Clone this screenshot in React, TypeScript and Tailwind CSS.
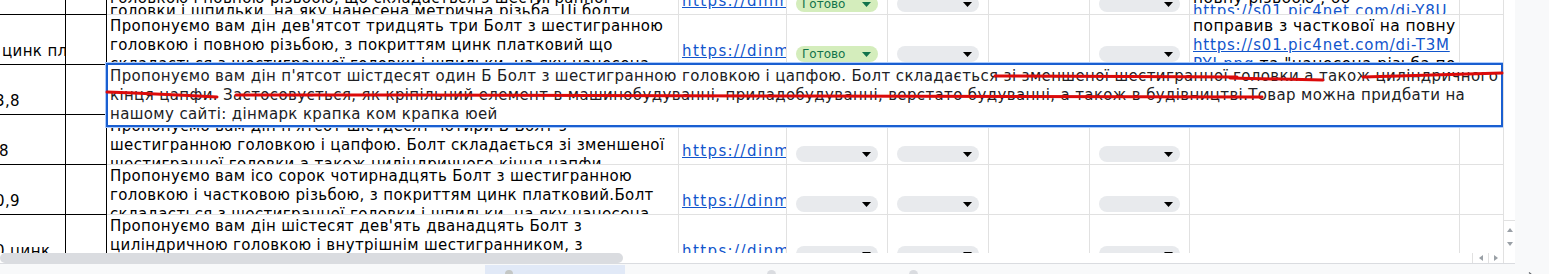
import type { ReactNode } from "react";

const GRID =
  "grid grid-cols-[66px_41px_572px_108px_101px_101px_101px_100px_270px_43px] h-[50px]";

const LINK = "text-[#1155cc] underline tracking-[0.8px]";
const NOTE = "text-[15.5px] tracking-[0.4px]";

type Row = {
  left?: ReactNode;
  desc: string[];
  cut?: boolean;
  status: "done" | "empty";
  comment?: ReactNode[];
};

const rows: Row[] = [
  {
    desc: [
      "головкою і повною різьбою, що складається з шестигранної",
      "головки і шпильки, на яку нанесена метрична різьба. Ці болти",
    ],
    cut: true,
    status: "done",
    comment: [
      <span className={NOTE}>повну різьбою , бо</span>,
      <span className={LINK}>https://s01.pic4net.com/di-Y8U</span>,
    ],
  },
  {
    left: <span className="ml-[2px]">цинк платковий</span>,
    desc: [
      "Пропонуємо вам дін дев'ятсот тридцять три Болт з шестигранною",
      "головкою і повною різьбою, з покриттям цинк платковий що",
      "складається з шестигранної головки і шпильки, на яку нанесена",
    ],
    status: "done",
    comment: [
      <span className={NOTE}>поправив з часткової на повну</span>,
      <span className={LINK}>https://s01.pic4net.com/di-T3M</span>,
      <>
        <span className={LINK}>PYI.png</span>
        <span className={NOTE}> та "нанесена різьба по</span>
      </>,
    ],
  },
  {
    left: <span className="-ml-[5px]">3,8</span>,
    desc: [
      "Пропонуємо вам дін п'ятсот шістдесят один Б Болт з",
      "шестигранною головкою і цапфою. Болт складається зі зменшеної",
    ],
    status: "empty",
  },
  {
    left: <span className="-ml-[1px]">8</span>,
    desc: [
      "Пропонуємо вам дін п'ятсот шістдесят чотири Б Болт з",
      "шестигранною головкою і цапфою. Болт складається зі зменшеної",
      "шестигранної головки а також циліндричного кінця цапфи.",
    ],
    status: "empty",
  },
  {
    left: <span className="-ml-[5px]">0,9</span>,
    desc: [
      "Пропонуємо вам ісо сорок чотирнадцять Болт з шестигранною",
      "головкою і частковою різьбою, з покриттям цинк платковий.Болт",
      "складається з шестигранної головки і шпильки, на яку нанесена",
    ],
    status: "empty",
  },
  {
    left: <span className="-ml-[5px]">0 цинк</span>,
    desc: [
      "Пропонуємо вам дін шістесят дев'ять дванадцять Болт з",
      "циліндричною головкою і внутрішнім шестигранником, з",
      "покриттям цинк платковий.",
    ],
    status: "empty",
  },
];

function Chip({ done }: { done?: boolean }) {
  return (
    <div
      className={`mx-[9px] mb-[2px] h-[16px] rounded-full flex items-center justify-between pl-[6px] pr-[7px] tracking-normal ${
        done ? "bg-[#d4edbc] text-[#11734b]" : "bg-[#e8eaed]"
      }`}
    >
      <span className="text-[12px] leading-none">{done ? "Готово" : ""}</span>
      <svg width="9" height="5" viewBox="0 0 9 5">
        <path d="M0 0h9L4.5 5z" fill={done ? "#11734b" : "#000"} />
      </svg>
    </div>
  );
}

function SheetRow({ row }: { row: Row }) {
  const gray = "border-r border-b border-[#e1e1e1]";
  return (
    <div className={GRID}>
      <div className="border-r border-b border-black overflow-hidden flex items-end pb-[3px] leading-[19px] whitespace-nowrap">
        {row.left}
      </div>
      <div className="border-r border-b border-black" />
      <div
        className={`${gray} overflow-hidden pl-[3px] ${
          row.cut ? "pt-[27px] leading-[13px]" : "pt-[2px] leading-[19px]"
        }`}
      >
        {row.desc.map((l, i) => (
          <div key={i} className="whitespace-nowrap">
            {l}
          </div>
        ))}
      </div>
      <div className={`${gray} overflow-hidden flex items-end pl-[3px] pb-[3px] leading-[19px] whitespace-nowrap`}>
        <span className="text-[#1155cc] underline tracking-[1.4px]">https://dinmark.com.ua/</span>
      </div>
      <div className={`${gray} flex flex-col justify-end`}>
        <Chip done={row.status === "done"} />
      </div>
      <div className={`${gray} flex flex-col justify-end`}>
        <Chip />
      </div>
      <div className={gray} />
      <div className={`${gray} flex flex-col justify-end`}>
        <Chip />
      </div>
      <div
        className={`${gray} overflow-hidden pl-[3px] ${
          row.cut ? "pt-[27px] leading-[13px]" : "pt-[2px] leading-[19px]"
        }`}
      >
        {row.comment?.map((l, i) => (
          <div key={i} className="whitespace-nowrap">
            {l}
          </div>
        ))}
      </div>
      <div className="border-b border-[#e1e1e1]" />
    </div>
  );
}

function Tri({ dir }: { dir: "up" | "down" | "left" | "right" }) {
  const d = {
    up: "M0 4L3 0L6 4z",
    down: "M0 0H6L3 4z",
    left: "M4 0V6L0 3z",
    right: "M0 0V6L4 3z",
  }[dir];
  const vertical = dir === "up" || dir === "down";
  return (
    <svg width={vertical ? 6 : 4} height={vertical ? 4 : 6} viewBox={vertical ? "0 0 6 4" : "0 0 4 6"}>
      <path d={d} fill="#9aa0a6" />
    </svg>
  );
}

export default function App() {
  return (
    <div className="relative w-[1549px] h-[274px] overflow-hidden bg-white text-black text-[15px] tracking-[0.36px] font-['DejaVu_Sans',sans-serif] flex flex-col">
      <div className="flex h-[253px]">
        <div className="relative w-[1503px] overflow-hidden">
          <div className="-mt-[35px]">
            {rows.map((r, i) => (
              <SheetRow key={i} row={r} />
            ))}
          </div>
          {/* cell editor */}
          <div className="absolute left-[106px] top-[63px] w-[1397px] h-[64px] border-2 border-[#1a5fd1] bg-white shadow-[0_0_0_1px_#aecbfa] pl-[2px] pt-[2px] leading-[19px] text-[#202124] overflow-hidden">
            <div className="whitespace-nowrap">
              Пропонуємо вам дін п'ятсот шістдесят один Б Болт з шестигранною головкою і цапфою. Болт складається зі зменшеної шестигранної головки а також циліндричного
            </div>
            <div className="whitespace-nowrap">
              кінця цапфи. Застосовується, як кріпільний елемент в машинобудуванні, приладобудуванні, верстато будуванні, а також в будівництві.Товар можна придбати на
            </div>
            <div className="whitespace-nowrap">нашому сайті: дінмарк крапка ком крапка юей</div>
          </div>
        </div>
        <div className="w-[12px] border-l border-[#e1e1e1] bg-white flex flex-col justify-end">
          <div className="h-[33px] border-t border-[#e1e1e1] flex flex-col items-center justify-center gap-[10px]">
            <Tri dir="up" />
            <Tri dir="down" />
          </div>
        </div>
        <div className="w-[34px] bg-[#f8f9fa]" />
      </div>
      <div className="flex h-[12px]">
        <div className="w-[1472px] bg-white flex items-center">
          <div className="w-[623px] h-[10px] rounded-full bg-[#dadce0]" />
        </div>
        <div className="w-[16px] border-l border-[#e1e1e1] bg-white flex items-center justify-center">
          <Tri dir="left" />
        </div>
        <div className="w-[15px] border-l border-[#e1e1e1] bg-white flex items-center justify-center">
          <Tri dir="right" />
        </div>
        <div className="w-[12px] border-l border-[#e1e1e1] bg-white" />
        <div className="w-[34px] bg-[#f8f9fa]" />
      </div>
      <div className="flex-1 bg-[#f8f9fa] flex">
        <div className="w-[1515px] border-t border-[#dadce0] flex items-start">
          <div className="ml-[485px] mt-[1px] w-[140px] h-[10px] bg-[#e1e9f7] flex justify-start">
            <div className="ml-[20px] mt-[5px] w-[8px] h-[8px] rounded-full bg-[#c4c7c5]" />
          </div>
          <div className="ml-[142px] mt-[6px] w-[9px] h-[9px] rounded-full bg-[#dadce0]" />
          <div className="ml-[133px] mt-[6px] w-[9px] h-[9px] rounded-full bg-[#dadce0]" />
        </div>
        <div className="flex-1 flex items-end justify-center pb-[1px]">
          <svg width="8" height="6" viewBox="0 0 8 6">
            <path d="M1 0.5L7 5.5" stroke="#5f6368" strokeWidth="1.2" />
          </svg>
        </div>
      </div>
      {/* hand-drawn red strike marks */}
      <svg
        className="absolute left-0 top-0 pointer-events-none"
        width="1549"
        height="274"
        viewBox="0 0 1549 274"
      >
        <g fill="none" stroke="#dc0a0a" strokeWidth="3" strokeLinecap="round">
          <path d="M995 76L1237 77" />
          <path d="M1230 78L1323 80" />
          <path d="M1363 77L1502 73" />
          <path d="M107 92Q160 94 217 97" />
          <path d="M236 95Q300 95 400 95L800 96L1262 97" />
        </g>
      </svg>
    </div>
  );
}
